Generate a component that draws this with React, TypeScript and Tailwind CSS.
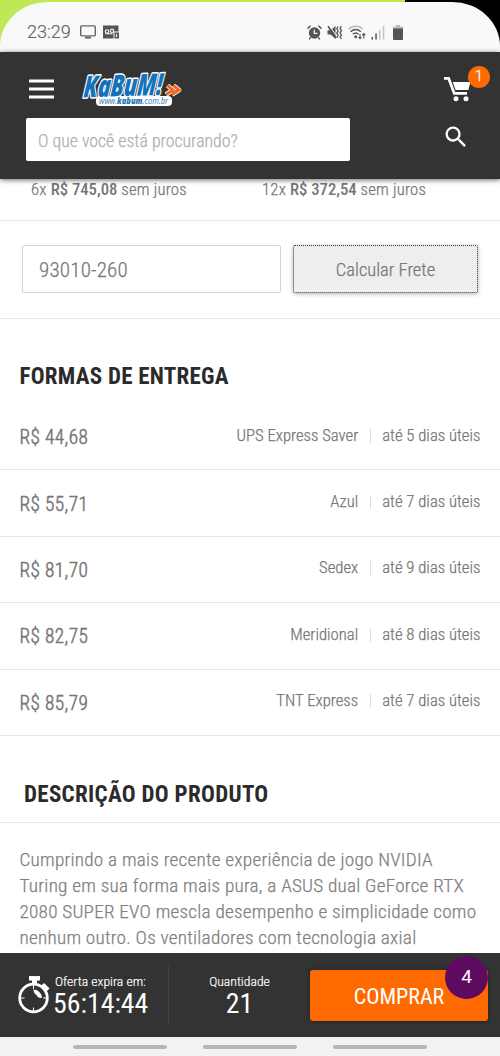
import { MdSearch } from "react-icons/md";

const shippingOptions = [
  { price: "R$ 44,68", carrier: "UPS Express Saver", deadline: "até 5 dias úteis" },
  { price: "R$ 55,71", carrier: "Azul", deadline: "até 7 dias úteis" },
  { price: "R$ 81,70", carrier: "Sedex", deadline: "até 9 dias úteis" },
  { price: "R$ 82,75", carrier: "Meridional", deadline: "até 8 dias úteis" },
  { price: "R$ 85,79", carrier: "TNT Express", deadline: "até 7 dias úteis" },
];

function StatusBar() {
  return (
    <div className="h-[52px] shrink-0 bg-gradient-to-r from-[#bfe854] from-[405px] to-black to-[405px] pt-[2px]">
      <div className="flex h-[50px] items-center rounded-t-[48px_44px] bg-[#f9f9f9] pl-[27px] pt-[10px] text-[#666]">
        <span className="w-[53px] font-[Roboto] text-[18px] font-light leading-none [-webkit-text-stroke:0.2px] [font-stretch:100%]">
          23:29
        </span>
        <svg className="h-[14px] w-4" viewBox="0 0 16 14" fill="none" stroke="currentColor" strokeWidth="1.4">
          <rect x="0.7" y="0.9" width="14.6" height="10" rx="1" />
          <path d="M5 12.6h6" strokeWidth="2" />
        </svg>
        <svg className="ml-[6px] h-[14px] w-[18px]" viewBox="0 0 18 14">
          <path d="M1 0.5h15.5v6h-5v7H1z" fill="#555" />
          <path d="M12.5 7.5h4.500v6h-4.500z" fill="#555" />
          <g fill="none" stroke="#f9f9f9" strokeWidth="1.1">
            <circle cx="5" cy="6.5" r="1.7" />
            <circle cx="10" cy="5.8" r="1.7" />
            <path d="M3.5 8.8h7M14.5 9v3" />
          </g>
        </svg>
        <div className="ml-[187px] flex items-center">
          <svg className="h-[15px] w-[15px]" viewBox="0 0 15 15" fill="#555">
            <circle cx="7.5" cy="8" r="5.7" />
            <path d="M0.5 3.6 3.6 0.8M14.5 3.6 11.4 0.8M3.6 12.4l-1.4 2M11.4 12.4l1.4 2" stroke="#555" strokeWidth="1.5" />
            <path d="M7.3 4.8v3.6h3" fill="none" stroke="#f9f9f9" strokeWidth="1.2" />
          </svg>
          <svg className="ml-[5px] h-[15px] w-4" viewBox="0 0 16 15" fill="#555">
            <path d="M0.5 5.2h3L8.5 1v13l-5-4.5h-3z" />
            <path d="M2 0.4 9.800 11" stroke="#f9f9f9" strokeWidth="1" />
            <path d="M1 1.2 9.2 13" stroke="#555" strokeWidth="1.5" />
            <path
              d="M11 1.5l-1.3 2.2 1.5 2.2-1.5 2.2 1.5 2.2-1.2 2.5M14.3 1l-1.3 2.4 1.5 2.2L13 7.8l1.5 2.2-1.3 2 1.2 2"
              fill="none"
              stroke="#555"
              strokeWidth="1.3"
            />
          </svg>
          <svg className="ml-[5px] h-[15px] w-[18px]" viewBox="0 0 18 15" fill="none" stroke="#555" strokeWidth="1.4">
            <path d="M0.6 4.2C4.5 0.2 11 0.2 14.8 4.2" stroke="#bbb" />
            <path d="M2.6 6.8c3-3 7.2-3 10.2 0M4.8 9.3c1.8-1.7 4-1.7 5.800 0" />
            <circle cx="7.7" cy="11.8" r="0.8" fill="#555" />
            <path d="M12 9v4.5M10.5 12l1.5 1.7 1.5-1.7M15.8 13.5V8.7M14.3 10.3l1.5-1.7 1.5 1.7" strokeWidth="1.1" />
          </svg>
          <svg className="ml-[5px] h-[15px] w-[14px]" viewBox="0 0 14 15">
            <path d="M0.5 12h1.500v2.500H0.500zM4.300 8.500h1.500v6H4.300z" fill="#555" />
            <path d="M8 5h1.500v9.500H8zM11.800 1h1.500v13.500h-1.500z" fill="#c4c4c4" />
          </svg>
          <svg className="ml-[8px] h-[15px] w-[10px]" viewBox="0 0 10 15">
            <path d="M3 0h4v1.500h3v3H0v-3h3z" fill="#bbb" />
            <path d="M0 3.500h10v10.500a1 1 0 0 1-1 1H1a1 1 0 0 1-1-1z" fill="#555" />
          </svg>
        </div>
      </div>
    </div>
  );
}

function Logo() {
  return (
    <svg className="ml-[27px] h-[38px] w-[102px] overflow-visible" viewBox="0 0 102 38">
      <rect x="15" y="26" width="76" height="10" rx="4" fill="#fff" />
      <text
        x="0"
        y="26"
        textLength="79"
        lengthAdjust="spacingAndGlyphs"
        transform="translate(5 0) rotate(-2 40 20) skewX(-7)"
        className="font-['Open_Sans',sans-serif] text-[30px] font-extrabold italic [font-stretch:100%]"
        fill="#1273bd"
        stroke="#fff"
        strokeWidth="3"
        strokeLinejoin="round"
        paintOrder="stroke"
      >
        KaBuM!
      </text>
      <text
        x="18"
        y="34"
        textLength="69"
        lengthAdjust="spacingAndGlyphs"
        className="font-['Open_Sans',sans-serif] text-[9px] italic [font-stretch:100%]"
        fill="#2777b5"
      >
        www.<tspan className="font-extrabold">kabum</tspan>.com.br
      </text>
      <g fill="none" stroke="#fff" strokeWidth="4.800" strokeLinejoin="round">
        <path d="M86.500 15.500 92 20l-7 4.500M92.500 15.500 98 20l-7 4.500" />
      </g>
      <g fill="none" stroke="#f26522" strokeWidth="3">
        <path d="M86.500 15.500 92 20l-7 4.500M92.500 15.500 98 20l-7 4.500" />
      </g>
    </svg>
  );
}

function Header() {
  return (
    <header className="relative z-10 h-[127px] shrink-0 bg-[#333] shadow-[0_1px_5px_rgba(0,0,0,0.6)]">
      <div className="flex h-[66px] items-center pl-[29px] pr-[10px] pt-[7px]">
        <svg className="h-[20px] w-[25px]" viewBox="0 0 25 20" fill="#fff">
          <path d="M0 0.500h25v3H0zM0 8.500h25v3H0zM0 16.500h25v3H0z" />
        </svg>
        <Logo />
        <div className="relative ml-auto h-[44px] w-[46px]">
          <svg className="mt-[9px] h-[26px] w-[27px]" viewBox="0 0 27 26" fill="#fff">
            <path d="M0 1h5.600l5.600 15H23v2.700H9.300L3.700 3.700H0z" />
            <path d="M8.700 6H26.500l-2.200 8H11.600z" />
            <circle cx="12" cy="22.800" r="2.500" />
            <circle cx="22" cy="22.800" r="2.500" />
          </svg>
          <span className="absolute right-0 top-[-1px] flex h-[22px] w-[22px] items-center justify-center rounded-full bg-[#ff6a00] font-[Roboto] text-[15px] font-light text-white [-webkit-text-stroke:0.3px] [font-stretch:100%]">
            1
          </span>
        </div>
      </div>
      <div className="flex pl-[26px]">
        <div className="flex h-[43px] w-[324px] items-center rounded-[2px] bg-white pl-[12px] pt-[3px] text-[17.800px] font-light text-[#b0b0b0] [-webkit-text-stroke:0.25px]">
          O que você está procurando?
        </div>
        <MdSearch className="ml-[92px] mt-[5px] size-[28px] text-white" />
      </div>
    </header>
  );
}

function Installments() {
  return (
    <div className="flex h-[42px] shrink-0 border-b border-[#e6e6e6] pl-[31px] text-[16.700px] font-light leading-[22px] tracking-[0.200px] text-[#777] [-webkit-text-stroke:0.25px]">
      <p className="w-[231px]">
        6x <b className="font-medium tracking-normal [-webkit-text-stroke:0]">R$ 745,08</b> sem juros
      </p>
      <p>
        12x <b className="font-medium tracking-normal [-webkit-text-stroke:0]">R$ 372,54</b> sem juros
      </p>
    </div>
  );
}

function ShippingForm() {
  return (
    <div className="flex h-[98px] shrink-0 items-start gap-[12px] border-b border-[#e9e9e9] pl-[22px] pt-[24px]">
      <div className="flex h-[48px] w-[259px] items-center rounded-[2px] border border-[#d4d4d4] pl-[16px] pt-[4px] text-[21px] font-light tracking-[0.200px] text-[#777] [-webkit-text-stroke:0.25px]">
        93010-260
      </div>
      <button className="h-[48px] w-[185px] rounded-[2px] border border-dotted border-[#333] bg-[#eee] pt-[4px] text-[18.500px] font-light text-[#777] shadow-[0_1px_4px_rgba(0,0,0,0.3)] [-webkit-text-stroke:0.25px]">
        Calcular Frete
      </button>
    </div>
  );
}

function ShippingList() {
  return (
    <section className="shrink-0">
      <h2 className="h-[85px] pl-[19.500px] pt-[43px] text-[23px] font-bold leading-[30px] tracking-[0.250px] text-[#2b2b2b]">
        FORMAS DE ENTREGA
      </h2>
      {shippingOptions.map((option) => (
        <div
          key={option.carrier}
          className="flex h-[66.400px] items-center border-b border-[#e6e6e6] px-[19.500px] pb-[2px] text-[16.700px] font-light leading-[20px] text-[#777] [-webkit-text-stroke:0.25px]"
        >
          <span className="pt-[5px] text-[19.300px] tracking-[0.400px] [-webkit-text-stroke:0.5px]">{option.price}</span>
          <span className="ml-auto">{option.carrier}</span>
          <span className="ml-[12px] h-[14px] w-px bg-[#ddd]" />
          <span className="pl-[11px]">{option.deadline}</span>
        </div>
      ))}
    </section>
  );
}

function Description() {
  return (
    <section className="min-h-0 flex-1 overflow-hidden">
      <h2 className="h-[87px] border-b border-[#e6e6e6] pl-[24px] pt-[44px] text-[23px] font-bold leading-[30px] tracking-[0.300px] text-[#2b2b2b]">
        DESCRIÇÃO DO PRODUTO
      </h2>
      <p className="pl-[19.500px] pt-[24.500px] text-[19.200px] font-light leading-[26px] tracking-[0.230px] text-[#808080] [-webkit-text-stroke:0.25px]">
        Cumprindo a mais recente experiência de jogo NVIDIA
        <br />
        Turing em sua forma mais pura, a ASUS dual GeForce RTX
        <br />
        2080 SUPER EVO mescla desempenho e simplicidade como
        <br />
        nenhum outro. Os ventiladores com tecnologia axial
      </p>
    </section>
  );
}

function BuyBar() {
  return (
    <div className="flex h-[84px] shrink-0 items-center bg-[#333] text-white">
      <svg className="ml-[18px] h-[38px] w-[32px]" viewBox="0 0 32 38" fill="none" stroke="#fff">
        <circle cx="15.500" cy="22" r="13.800" strokeWidth="2.800" />
        <path d="M11 2.300h11" strokeWidth="4.500" />
        <path d="M16.500 4v5" strokeWidth="5" />
        <path d="M24.500 8.500 30 14" strokeWidth="4.500" />
        <path d="M15.500 9v4M15.500 31.500v4M2.500 22h4M25 22h4" strokeWidth="1" />
        <path d="M15.500 13.500c4 0 8 3.500 8.500 8-2 1-4 0-5-1.500-1-1.800-3.500-2.500-3.500-6.500z" fill="#fff" stroke="none" />
      </svg>
      <div className="ml-[3px] w-[115px]">
        <p className="pl-[2px] text-[13.700px] font-light leading-[17px] [-webkit-text-stroke:0.2px]">Oferta expira em:</p>
        <p className="mb-px text-[27.800px] leading-[27px]">56:14:44</p>
      </div>
      <div className="h-[58px] w-px bg-[#444]" />
      <div className="w-[141px] text-center">
        <p className="text-[13.700px] font-light leading-[17px] [-webkit-text-stroke:0.2px]">Quantidade</p>
        <p className="mb-px text-[27.800px] leading-[27px]">21</p>
      </div>
      <div className="relative">
        <button className="h-[51px] w-[178px] rounded-[3px] bg-[#ff6a00] pt-[2px] text-[22px] shadow-[0_0_4px_rgba(0,0,0,0.4)]">
          COMPRAR
        </button>
        <span className="absolute right-0 top-[-14px] flex h-[43px] w-[43px] items-center justify-center rounded-full bg-[#5f0a61] font-[Roboto] text-[19px] [font-stretch:100%]">
          4
        </span>
      </div>
    </div>
  );
}

export default function App() {
  return (
    <div className="flex h-[1056px] w-[500px] flex-col overflow-hidden bg-white font-['Roboto_Condensed',Roboto,sans-serif] [font-stretch:75%]">
      <StatusBar />
      <Header />
      <Installments />
      <ShippingForm />
      <ShippingList />
      <Description />
      <BuyBar />
      <div className="flex h-[19px] shrink-0 justify-center gap-[36px] bg-[#f2f2f2] pt-[8px]">
        <div className="h-[4px] w-[94px] rounded-full bg-[#b5b5b5]" />
        <div className="h-[4px] w-[94px] rounded-full bg-[#b5b5b5]" />
        <div className="h-[4px] w-[94px] rounded-full bg-[#b5b5b5]" />
      </div>
    </div>
  );
}
